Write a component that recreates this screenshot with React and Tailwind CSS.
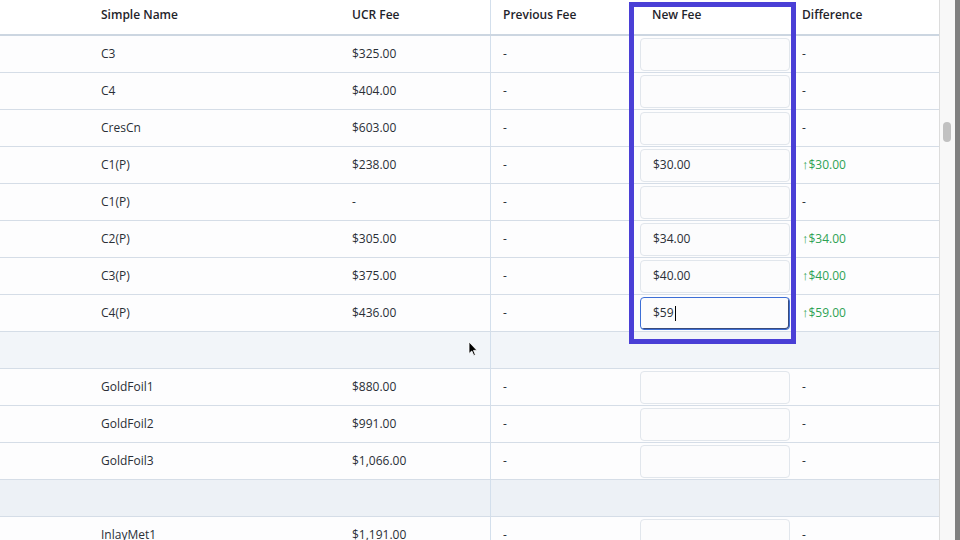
import React from 'react';

const rows = [
  { name: 'C3', ucr: '$325.00', fee: '' },
  { name: 'C4', ucr: '$404.00', fee: '' },
  { name: 'CresCn', ucr: '$603.00', fee: '' },
  { name: 'C1(P)', ucr: '$238.00', fee: '$30.00', diff: '$30.00' },
  { name: 'C1(P)', ucr: '-', fee: '' },
  { name: 'C2(P)', ucr: '$305.00', fee: '$34.00', diff: '$34.00' },
  { name: 'C3(P)', ucr: '$375.00', fee: '$40.00', diff: '$40.00' },
  { name: 'C4(P)', ucr: '$436.00', fee: '$59', diff: '$59.00', focused: true },
  { group: true, hover: true },
  { name: 'GoldFoil1', ucr: '$880.00', fee: '' },
  { name: 'GoldFoil2', ucr: '$991.00', fee: '' },
  { name: 'GoldFoil3', ucr: '$1,066.00', fee: '' },
  { group: true },
  { name: 'InlayMet1', ucr: '$1,191.00', fee: '' },
];

const cols = 'grid grid-cols-[89px_251px_150px_138px_162px_150px]';

function FeeInput({ value, focused }) {
  return (
    <div
      className={`w-[150px] h-[33px] rounded-[4px] bg-[#fcfcfd] flex items-center pl-[12px] text-[12px] text-[#2a2f36] ${
        focused ? 'border border-[#3d6fd6] shadow-[inset_-1px_-1px_0_#3a4a7a]' : 'border border-[#e1e6ec]'
      }`}
    >
      {value}
      {focused && <span className="inline-block w-px h-[15px] bg-black ml-px" />}
    </div>
  );
}

export default function App() {
  return (
    <div className="relative w-[960px] h-[540px] overflow-hidden bg-white flex" style={{ fontFamily: '"Open Sans", "Noto Sans", sans-serif' }}>
      <div className="w-[940px] shrink-0 border-r border-[#dcdcdc] bg-[#fdfdfe]">
        {/* Header */}
        <div className={`${cols} h-[36px] border-b-2 border-[#ccd6e1] bg-white text-[12px] font-semibold text-[#1f242b]`}>
          <div />
          <div className="pl-[12px] pt-[6px]">Simple Name</div>
          <div className="pl-[12px] pt-[6px]">UCR Fee</div>
          <div className="pl-[12px] pt-[6px] border-l border-[#d3dfec]">Previous Fee</div>
          <div className="pl-[24px] pt-[6px]">New Fee</div>
          <div className="pl-[12px] pt-[6px]">Difference</div>
        </div>

        {rows.map((r, i) =>
          r.group ? (
            <div key={i} className={`${cols} h-[37px] border-b border-[#d5dde7] ${r.hover ? 'bg-[#f2f5f9]' : 'bg-[#edf1f6]'}`}>
              <div />
              <div />
              <div />
              <div className="border-l border-[#d3dfec]" />
              <div />
              <div />
            </div>
          ) : (
            <div key={i} className={`${cols} h-[37px] border-b border-[#d5dde7] items-center text-[12px] text-[#2a2f36]`}>
              <div />
              <div className="pl-[12px]">{r.name}</div>
              <div className="pl-[12px]">{r.ucr}</div>
              <div className="h-full flex items-center pl-[12px] border-l border-[#d3dfec]">-</div>
              <div className="pl-[12px]">
                <FeeInput value={r.fee} focused={r.focused} />
              </div>
              <div className={`pl-[12px] ${r.diff ? 'text-[#2ea254]' : ''}`}>
                {r.diff ? (
                  <span>
                    <span className="text-[13px]">↑</span>
                    {r.diff}
                  </span>
                ) : (
                  '-'
                )}
              </div>
            </div>
          )
        )}
      </div>

      {/* Scrollbar */}
      <div className="w-[15px] shrink-0 bg-[#f8f8f8] relative">
        <div className="absolute left-[3px] top-[122px] w-[8px] h-[20px] rounded-full bg-[#c1c1c1]" />
      </div>
      <div className="w-[5px] shrink-0 bg-[#808080]" />

      {/* Highlight box */}
      <div className="absolute left-[629px] top-[2px] w-[167px] h-[342px] border-[5px] border-[#4a3fd6] pointer-events-none" />

      {/* Mouse cursor */}
      <svg className="absolute left-[468px] top-[341px]" width="10" height="16" viewBox="0 0 10 16">
        <path d="M1 1 L1 12.5 L3.8 10 L5.8 14.5 L7.4 13.8 L5.5 9.4 L9 9.4 Z" fill="#000" stroke="#fff" strokeWidth="0.8" />
      </svg>
    </div>
  );
}
